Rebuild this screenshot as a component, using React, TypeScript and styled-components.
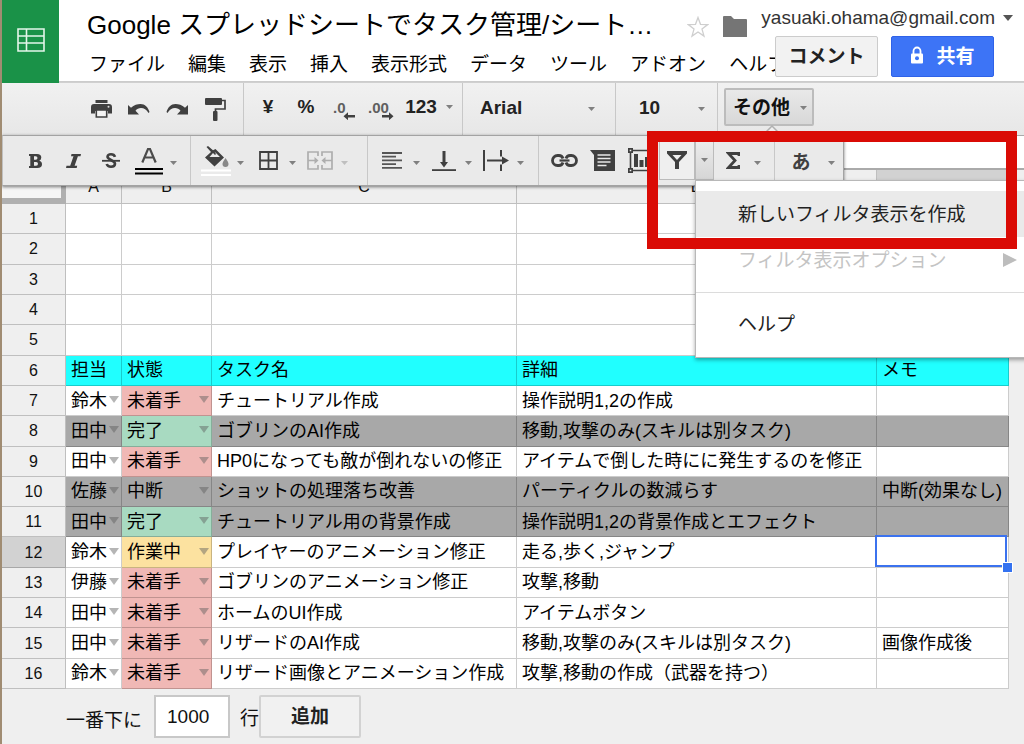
import React from 'react';
import styled, { createGlobalStyle, css } from 'styled-components';

const GlobalStyle = createGlobalStyle`
  *, *::before, *::after { box-sizing: border-box; }
  html { overflow: hidden; }
  body {
    margin: 0;
    background: #efefef;
    color: #111;
    font-family: "Liberation Sans", "Noto Sans CJK JP", sans-serif;
    font-size: 19px;
  }
  button, input, select { font: inherit; color: inherit; }
  svg { display: block; flex: none; }
`;

const Page = styled.div`
  position: relative;
  min-height: 100vh;
  border-left: 2px solid #a08c72;
  overflow: hidden;
`;

/* ---------- header ---------- */

const Header = styled.header`
  display: flex;
  height: 82px;
  background: #fff;
`;

const Logo = styled.a`
  flex: none;
  display: flex;
  align-items: center;
  justify-content: center;
  width: 57px;
  height: 83px;
  padding-bottom: 4px;
  background: #1a9248;
  z-index: 1;
`;

const HeaderBody = styled.div`
  flex: 1;
  min-width: 0;
  padding: 0 0 0 28px;
  border-bottom: 1px solid #ccc;
`;

const TitleRow = styled.div`
  display: flex;
  height: 36px;
  padding-right: 11px;
`;

const Title = styled.h1`
  margin: 0;
  flex: 1;
  font-size: 26px;
  font-weight: 400;
  line-height: 50px;
  white-space: nowrap;
  color: #000;
`;

const IconButton = styled.button`
  height: 53px;
  padding: 0;
  margin-right: 14px;
  border: 0;
  background: none;
`;

const Account = styled.button`
  display: flex;
  align-items: center;
  gap: 8px;
  height: 36px;
  padding: 0;
  border: 0;
  background: none;
  color: #333;
`;

const MenuRow = styled.div`
  display: flex;
  align-items: flex-start;
  gap: 13px;
  padding: 0 30px 0 2px;
`;

const MenuBar = styled.nav`
  flex: 1;
  min-width: 0;
  display: flex;
  gap: 23px;
  padding-top: 15px;
`;

const MenuLink = styled.a`
  flex: none;
  line-height: 28px;
  color: #000;
  text-decoration: none;
`;

const HeaderButton = styled.button<{ $primary?: boolean }>`
  position: relative;
  z-index: 1;
  flex: none;
  display: flex;
  align-items: center;
  justify-content: center;
  gap: 12px;
  width: 103px;
  height: 41px;
  padding: 0 0 4px;
  font-weight: 700;
  border: 1px solid #ccc;
  border-radius: 2px;
  background: #f2f2f2;
  color: #222;
  ${(p) => p.$primary && css`
    border-color: #2f62e8;
    background: #3d74f6;
    color: #fff;
  `}
`;

/* ---------- toolbars ---------- */

const Toolbar = styled.div`
  display: flex;
  height: 53px;
  padding-left: 80px;
  border-top: 1px solid #d0d0d0;
  background: linear-gradient(#f1f1f1, #e7e7e7);
`;

const Group = styled.div<{ $width: number; $pad?: number; $gap?: number; $open?: boolean }>`
  flex: none;
  display: flex;
  align-items: center;
  gap: ${(p) => p.$gap ?? 0}px;
  width: ${(p) => p.$width}px;
  padding-left: ${(p) => p.$pad ?? 0}px;
  border-right: ${(p) => (p.$open ? '0' : '1px solid #c8c8c8')};
`;

const Tool = styled.button<{ $wide?: boolean; $dim?: boolean; $text?: boolean }>`
  flex: none;
  display: flex;
  align-items: center;
  justify-content: center;
  gap: 9px;
  width: ${(p) => (p.$wide ? 56 : 38)}px;
  height: 38px;
  padding: 0 0 ${(p) => (p.$text ? 4 : 0)}px;
  border: 0;
  background: none;
  color: ${(p) => (p.$text ? '#222' : '#404040')};
  font-weight: 700;
  opacity: ${(p) => (p.$dim ? 0.35 : 1)};
`;

const Arrow = styled.button<{ $dim?: boolean }>`
  flex: none;
  display: flex;
  align-items: center;
  justify-content: center;
  width: 10px;
  height: 38px;
  margin-right: 4px;
  padding: 4px 0 0;
  border: 0;
  background: none;
  opacity: ${(p) => (p.$dim ? 0.4 : 1)};
`;

const Picker = styled.label<{ $end: number }>`
  display: flex;
  flex: 1;
  align-items: center;
  padding-right: ${(p) => p.$end}px;
`;

const PickerSelect = styled.select`
  flex: 1;
  min-width: 0;
  padding: 0 0 4px;
  border: 0;
  appearance: none;
  background: none;
  font-weight: 700;
  color: #222;
`;

const MoreButton = styled.button`
  display: flex;
  align-items: center;
  gap: 10px;
  width: 90px;
  height: 38px;
  margin: 5px 0 0 6px;
  padding: 0 0 4px 7px;
  border: 2px solid #bcbcbc;
  border-radius: 2px;
  background: linear-gradient(#e9e9e9, #d8d8d8);
  font-weight: 700;
  color: #111;
  svg { margin-top: 6px; }
`;

const Workspace = styled.div`
  position: relative;
`;

const Palette = styled.div`
  position: absolute;
  z-index: 2;
  top: 0;
  left: 0;
  display: flex;
  height: 51px;
  border: 1px solid #a3a3a3;
  border-left-color: #c0c0c0;
  background: #eaeaea;
  box-shadow: 0 1px 3px rgba(0, 0, 0, 0.5);
`;

const Callout = styled.svg`
  position: absolute;
  left: 761px;
  top: -11px;
  z-index: 3;
`;

const FilterSplit = styled.div`
  position: relative;
  display: flex;
  padding-top: 4px;
`;

const FilterButton = styled.button<{ $active?: boolean }>`
  display: flex;
  align-items: center;
  justify-content: center;
  width: ${(p) => (p.$active ? 19 : 36)}px;
  height: 40px;
  padding: 0;
  border: 1px solid #bbb;
  background: ${(p) => (p.$active ? 'linear-gradient(#ececec, #d6d6d6)' : '#efefef')};
`;

const Menu = styled.div`
  position: absolute;
  z-index: 4;
  top: 44px;
  left: 36px;
  width: 340px;
  height: 178px;
  padding-top: 10px;
  border: 1px solid #b8b8b8;
  background: #fff;
  box-shadow: 0 2px 4px rgba(0, 0, 0, 0.35);
`;

const MenuItem = styled.button<{ $state?: 'hover' | 'off' }>`
  display: flex;
  align-items: center;
  justify-content: space-between;
  width: 100%;
  height: 46px;
  padding: 0 17px 4px 42px;
  border: 0;
  background: ${(p) => (p.$state === 'hover' ? '#eaeaea' : '#fff')};
  color: ${(p) => (p.$state === 'off' ? '#c4c4c4' : '#222')};
  text-align: left;
  svg { margin-top: 4px; }
`;

const Rule = styled.hr`
  height: 1px;
  margin: 9px 0 8px;
  border: 0;
  background: #dcdcdc;
`;

const Highlight = styled.div`
  position: absolute;
  z-index: 5;
  top: -4px;
  left: 645px;
  width: 370px;
  height: 118px;
  border: 11px solid #da0b05;
  pointer-events: none;
`;

const FormulaBar = styled.input`
  display: block;
  width: 100%;
  height: 35px;
  padding: 0 8px;
  border: solid #aaa;
  border-width: 1px 0 2px;
  background: #fff;
`;

/* ---------- sheet ---------- */

const Sheet = styled.table`
  table-layout: fixed;
  width: 1007px;
  height: 519px;
  border-collapse: separate;
  border-spacing: 0;
`;

const line = '1px solid rgba(0, 0, 0, 0.2)';

const Corner = styled.td`
  height: 34px;
  padding: 0;
  border: solid #b0b0b0;
  border-width: 0 5px 6px 0;
  background: #f6f6f6;
`;

const Head = styled.th<{ $selected?: boolean }>`
  padding: 0;
  border-right: ${line};
  border-bottom: ${line};
  background: ${(p) => (p.$selected ? '#d2d2d2' : '#efefef')};
  font-size: 16px;
  font-weight: 400;
  line-height: 29px;
`;

const ColumnHead = styled(Head)`
  height: 34px;
`;

const fills = {
  none: '#fff',
  title: '#20ffff',
  done: '#a8a8a8',
  red: '#f0b8b5',
  green: '#a8dac1',
  yellow: '#fce2a0',
};
type Fill = keyof typeof fills;

const Cell = styled.td<{ $fill: Fill }>`
  position: relative;
  padding: 0 0 0 5px;
  border-right: ${line};
  border-bottom: ${line};
  background: ${(p) => fills[p.$fill]};
  font-size: 18px;
  line-height: 24px;
  white-space: nowrap;
  color: #000;
`;

const Choice = styled.div`
  display: flex;
  align-items: center;
  justify-content: space-between;
  padding-right: 2px;
`;

const ChoiceArrow = styled.button`
  padding: 0 0 2px;
  border: 0;
  background: none;
`;

const Cursor = styled.div`
  position: absolute;
  inset: -2px 1px 0 -2px;
  border: 2px solid #3b72ee;
`;

const Handle = styled.div`
  position: absolute;
  z-index: 1;
  right: -5px;
  bottom: -6px;
  width: 11px;
  height: 11px;
  border: 1px solid #fff;
  background: #3472f0;
`;

const Footer = styled.form`
  display: flex;
  align-items: center;
  height: 55px;
  padding-left: 64px;
`;

const FooterLabel = styled.label`
  padding-top: 8px;
  line-height: 28px;
`;

const RowCount = styled.input`
  width: 76px;
  height: 43px;
  margin: 0 10px 0 12px;
  padding: 0 0 0 11px;
  border: 2px solid #c8c8c8;
  background: #fff;
`;

const AddButton = styled.button`
  width: 102px;
  height: 43px;
  padding: 0 0 5px;
  border: 2px solid #d2d2d2;
  border-radius: 2px;
  background: #f1f1f1;
  font-weight: 700;
  color: #222;
`;

/* ---------- icons ---------- */

const ink = '#404040';

const Caret = ({ color = '#808080', w = 7, h = 4 }: { color?: string; w?: number; h?: number }) => (
  <svg width={w} height={h} viewBox="0 0 8 5" preserveAspectRatio="none" fill={color} aria-hidden>
    <path d="M0 0h8L4 5z" />
  </svg>
);

const SheetsIcon = () => (
  <svg width="28" height="24" viewBox="0 0 28 24" fill="none" stroke="#e4f6ea" strokeWidth="1.6">
    <path d="M1 1h26v22H1zM1 8h26M1 15h26M9.500 1v22" />
  </svg>
);

const Star = () => (
  <svg width="22" height="22" viewBox="0 0 22 22" fill="#fff" stroke="#cfcfcf" strokeWidth="1.3">
    <path d="M11 1.500l2.500 6.800 7.200.3-5.700 4.500 2 7L11 16l-6 4.100 2-7L1.300 8.600l7.200-.3z" />
  </svg>
);

const Folder = () => (
  <svg width="24" height="21" viewBox="0 0 24 21" fill="#757575">
    <path d="M0 1q0-1 1-1h7l3 3h12q1 0 1 1v17H0z" />
  </svg>
);

const Lock = () => (
  <svg width="14" height="18" viewBox="0 0 14 18">
    <path d="M3.500 8V5a3.500 3.500 0 0 1 7 0v3" fill="none" stroke="#fff" strokeWidth="1.8" />
    <rect x="1" y="7.500" width="12" height="10" rx="1" fill="#fff" />
    <circle cx="7" cy="12.300" r="2" fill="#3d74f6" />
  </svg>
);

const Printer = () => (
  <svg width="21" height="18" viewBox="0 0 21 18" fill={ink}>
    <path d="M4.500 0h12v3h-12z" />
    <path d="M3 4h15q3 0 3 3v6.500h-4V11H4v2.500H0V7q0-3 3-3z" />
    <path d="M5.300 10h10.400v7H5.300z" fill="#f4f4f4" stroke={ink} strokeWidth="1.6" />
    <circle cx="17.500" cy="6.800" r="1" fill="#ddd" />
  </svg>
);

const Undo = ({ flip }: { flip?: boolean }) => (
  <svg width="22" height="11" viewBox="0 0 22 11">
    <g transform={flip ? 'translate(22 0) scale(-1 1)' : undefined} fill={ink}>
      <path d="M0 1l3 2.800C6 .8 9.500 0 12.500 0 17 0 20 3 21.500 8l-1 1C18.500 5.500 16 4 13 4c-2.300 0-4.200.9-5.500 2.800L11 10.500H0z" />
    </g>
  </svg>
);

const Roller = () => (
  <svg width="21" height="23" viewBox="0 0 21 23" fill={ink}>
    <rect width="17" height="7" rx="1" />
    <path d="M17 2.500h3V11h-9.500v3.500" fill="none" stroke={ink} strokeWidth="1.700" />
    <rect x="8" y="13" width="4.500" height="10" rx="1" />
  </svg>
);

const Decimals = ({ more }: { more?: boolean }) => (
  <svg width="28" height="22" viewBox="0 0 28 22" fill="#606060">
    <text x={more ? 0 : 3} y="15" fontSize="15" fontWeight="700" fontFamily="Liberation Sans, sans-serif">
      {more ? '.00' : '.0'}
    </text>
    {more ? (
      <path d="M14 17h7v-2.800l4.500 4-4.500 4v-2.800h-7z" fill={ink} />
    ) : (
      <path d="M25 17h-7v-2.800l-4.500 4 4.500 4v-2.800h7z" fill={ink} />
    )}
  </svg>
);

const Bold = () => (
  <svg width="13" height="14" viewBox="0 0 13 14" fill={ink} fillRule="evenodd">
    <path d="M0 0h8q4.300 0 4.300 3.600 0 2.400-2 3.100 2.700.7 2.700 3.500Q13 14 8.400 14H0v-2h1.300V2H0zM5 2.300v3.400h1.700Q8.500 5.700 8.500 4T6.700 2.300zM5 8v3.700h2q2 0 2-1.900T7 8z" />
  </svg>
);

const Italic = () => (
  <svg width="15" height="14" viewBox="0 0 15 14" fill={ink}>
    <path d="M5.500 0H15l-.5 2.300h-2.600L8.600 11.700h2.600L10.700 14H0l.5-2.300h3.700L7.500 2.300H5z" />
  </svg>
);

const Strike = () => (
  <svg width="18" height="15" viewBox="0 0 18 15" fill="none" stroke={ink}>
    <path d="M13 3.800Q12.200 1.300 9 1.300T5.500 3.800C5.500 7 13 7 13 10.800q0 2.900-4 2.900-3.500 0-4.300-2.700" strokeWidth="2.600" />
    <path d="M0 7.800h18" strokeWidth="1.800" />
  </svg>
);

const TextColor = () => (
  <svg width="30" height="28" viewBox="0 0 30 28">
    <path d="M8.300 15.500L14 2h2l5.700 13.500M10.500 10.500h9" fill="none" stroke="#4c4c4c" strokeWidth="2.200" />
    <path d="M1 22h28M1 26.500h28" stroke="#000" strokeWidth="2" />
  </svg>
);

const Bucket = () => (
  <svg width="31" height="30" viewBox="0 0 31 30" fill={ink}>
    <path d="M5.500 1L7 0l5 4.200L14.500 3 23 11.500 13.500 20.500 4 11.500 10 6z" />
    <path d="M13.500 5.500L19 11H8.500l3.500-4 2 2 1-1z" fill="#eaeaea" />
    <path d="M24.500 12q3 4 3 6a3 3 0 0 1-6 0q0-2 3-6z" fill="#888" />
    <path d="M0 24.500h30M0 29h30" stroke="#fff" strokeWidth="2" />
  </svg>
);

const Borders = () => (
  <svg width="19" height="19" viewBox="0 0 19 19" fill="none" stroke={ink} strokeWidth="1.800">
    <path d="M1 1h17v17H1zM9.500 1v17M1 9.500h17" />
  </svg>
);

const Merge = () => (
  <svg width="26" height="19" viewBox="0 0 26 19" fill="none" stroke={ink} strokeWidth="1.700">
    <path d="M11 5V1H1v17h10v-4M15 5V1h10v17H15v-4M1 9.500h7M25 9.500h-7" />
    <path d="M7.500 6l4 3.500-4 3.500zM18.500 6l-4 3.500 4 3.500z" fill={ink} stroke="none" />
  </svg>
);

const AlignLeft = () => (
  <svg width="21" height="17" viewBox="0 0 21 17" stroke="#555" strokeWidth="1.800">
    <path d="M0 1h20M0 4.700h14M0 8.400h20M0 12.100h14M0 15.800h20" />
  </svg>
);

const AlignBottom = () => (
  <svg width="24" height="20" viewBox="0 0 24 20" fill={ink}>
    <path d="M10.500 0h3v11H16l-4 5.500L8 11h2.500z" />
    <path d="M0 18.200h24V20H0z" />
  </svg>
);

const Wrap = () => (
  <svg width="26" height="21" viewBox="0 0 26 21" fill={ink}>
    <path d="M0 0h2v21H0zM17 0h2v6.500h-2zM17 14.500h2V21h-2zM4 9.500h15V6.500l7 4-7 4v-3H4z" />
  </svg>
);

const LinkIcon = () => (
  <svg width="27" height="13" viewBox="0 0 27 13" fill="none" stroke={ink} strokeWidth="2.800">
    <path d="M12 4.500Q11 1.500 8 1.500H6.500a5 5 0 0 0 0 10H8q3 0 4-3M15 4.500q1-3 4-3h1.500a5 5 0 0 1 0 10H19q-3 0-4-3" />
    <path d="M8.500 6.500h10" strokeWidth="2.200" />
  </svg>
);

const CommentIcon = () => (
  <svg width="25" height="21" viewBox="0 0 25 21" fill={ink}>
    <path d="M0 0h25v21H4V5z" />
    <path d="M7.500 5h13M7.500 8.500h13M7.500 12h13M7.500 15.500h9" stroke="#e8e8e8" strokeWidth="1.700" />
  </svg>
);

const ChartIcon = () => (
  <svg width="25" height="25" viewBox="0 0 25 25" fill={ink}>
    <path d="M2.500 2.500h20v20h-20z" fill="none" stroke={ink} strokeWidth="1.600" />
    <path d="M0 0h5v5H0zM20 0h5v5h-5zM0 20h5v5H0zM20 20h5v5h-5zM6 6h4v13H6zM11.500 12h4v7h-4zM17 9h3.500v10H17z" />
    <path d="M1.700 1.700h1.600v1.600H1.700zM1.700 21.700h1.600v1.600H1.700z" fill="#eee" />
  </svg>
);

const Funnel = () => (
  <svg width="20" height="18" viewBox="0 0 20 18">
    <path d="M0 0h20v2.500L12 11v7H8v-7L0 2.500z" fill={ink} />
    <path d="M5.500 4h9L10 9z" fill="#efefef" />
  </svg>
);

const Sigma = () => (
  <svg width="14" height="17" viewBox="0 0 14 17" fill="none" stroke={ink} strokeWidth="2.800">
    <path d="M13 4V1.500H2.500L9 8.500l-6.500 7H13V13" />
  </svg>
);

/* ---------- data ---------- */

const menus = ['ファイル', '編集', '表示', '挿入', '表示形式', 'データ', 'ツール', 'アドオン', 'ヘルプ'];

const columns = ['A', 'B', 'C', 'D', 'E'];

const statusFill: Record<string, Fill> = {
  未着手: 'red',
  完了: 'green',
  作業中: 'yellow',
  中断: 'done',
};

const rows: string[][] = [
  [], [], [], [], [],
  ['担当', '状態', 'タスク名', '詳細', 'メモ'],
  ['鈴木', '未着手', 'チュートリアル作成', '操作説明1,2の作成', ''],
  ['田中', '完了', 'ゴブリンのAI作成', '移動,攻撃のみ(スキルは別タスク)', ''],
  ['田中', '未着手', 'HP0になっても敵が倒れないの修正', 'アイテムで倒した時にに発生するのを修正', ''],
  ['佐藤', '中断', 'ショットの処理落ち改善', 'パーティクルの数減らす', '中断(効果なし)'],
  ['田中', '完了', 'チュートリアル用の背景作成', '操作説明1,2の背景作成とエフェクト', ''],
  ['鈴木', '作業中', 'プレイヤーのアニメーション修正', '走る,歩く,ジャンプ', ''],
  ['伊藤', '未着手', 'ゴブリンのアニメーション修正', '攻撃,移動', ''],
  ['田中', '未着手', 'ホームのUI作成', 'アイテムボタン', ''],
  ['田中', '未着手', 'リザードのAI作成', '移動,攻撃のみ(スキルは別タスク)', '画像作成後'],
  ['鈴木', '未着手', 'リザード画像とアニメーション作成', '攻撃,移動の作成（武器を持つ）', ''],
];

const SELECTED_ROW = 12;

const fillFor = (row: string[], n: number, col: number): Fill => {
  if (n < 6) return 'none';
  if (n === 6) return 'title';
  if (col === 1) return statusFill[row[1]];
  return row[1] === '完了' || row[1] === '中断' ? 'done' : 'none';
};

const Split = ({ label, dim, children }: { label: string; dim?: boolean; children: React.ReactNode }) => (
  <>
    <Tool aria-label={label} $dim={dim}>{children}</Tool>
    <Arrow aria-label={`${label}のオプション`} $dim={dim}><Caret /></Arrow>
  </>
);

export default function App() {
  return (
    <Page>
      <GlobalStyle />
      <Header>
        <Logo href="#" aria-label="スプレッドシート"><SheetsIcon /></Logo>
        <HeaderBody>
          <TitleRow>
            <Title>Google スプレッドシートでタスク管理/シート…</Title>
            <IconButton aria-label="スター"><Star /></IconButton>
            <IconButton aria-label="フォルダ"><Folder /></IconButton>
            <Account>yasuaki.ohama@gmail.com<Caret color="#555" w={10} h={6} /></Account>
          </TitleRow>
          <MenuRow>
            <MenuBar>
              {menus.map((m) => <MenuLink key={m} href="#">{m}</MenuLink>)}
            </MenuBar>
            <HeaderButton>コメント</HeaderButton>
            <HeaderButton $primary><Lock />共有</HeaderButton>
          </MenuRow>
        </HeaderBody>
      </Header>

      <Toolbar role="toolbar">
        <Group $width={162}>
          <Tool aria-label="印刷"><Printer /></Tool>
          <Tool aria-label="元に戻す"><Undo /></Tool>
          <Tool aria-label="やり直し"><Undo flip /></Tool>
          <Tool aria-label="書式をコピー"><Roller /></Tool>
        </Group>
        <Group $width={219} $pad={5}>
          <Tool $text>¥</Tool>
          <Tool $text>%</Tool>
          <Tool aria-label="小数点以下の桁数を減らす"><Decimals /></Tool>
          <Tool aria-label="小数点以下の桁数を増やす"><Decimals more /></Tool>
          <Tool $wide $text>123<Caret /></Tool>
        </Group>
        <Group $width={153} $pad={17}>
          <Picker $end={20}>
            <PickerSelect aria-label="フォント"><option>Arial</option></PickerSelect>
            <Caret />
          </Picker>
        </Group>
        <Group $width={102} $pad={23}>
          <Picker $end={12}>
            <PickerSelect aria-label="フォントサイズ"><option>10</option></PickerSelect>
            <Caret />
          </Picker>
        </Group>
        <MoreButton>その他<Caret /></MoreButton>
      </Toolbar>

      <Workspace>
        <Callout width="18" height="10" viewBox="0 0 18 10">
          <path d="M1 10l8-8 8 8" fill="#efefef" stroke="#b0b0b0" strokeWidth="1.500" />
        </Callout>
        <Palette role="toolbar">
          <Group $width={188} $pad={13}>
            <Tool aria-label="太字"><Bold /></Tool>
            <Tool aria-label="斜体"><Italic /></Tool>
            <Tool aria-label="取り消し線"><Strike /></Tool>
            <Split label="テキストの色"><TextColor /></Split>
          </Group>
          <Group $width={177} $pad={6}>
            <Split label="塗りつぶしの色"><Bucket /></Split>
            <Split label="枠線"><Borders /></Split>
            <Split label="セルを結合" dim><Merge /></Split>
          </Group>
          <Group $width={171} $pad={5}>
            <Split label="水平方向の配置"><AlignLeft /></Split>
            <Split label="垂直方向の配置"><AlignBottom /></Split>
            <Split label="テキストを折り返す"><Wrap /></Split>
          </Group>
          <Group $width={120} $pad={6} $open>
            <Tool aria-label="リンクを挿入"><LinkIcon /></Tool>
            <Tool aria-label="コメントを挿入"><CommentIcon /></Tool>
            <Tool aria-label="グラフを挿入"><ChartIcon /></Tool>
          </Group>
          <FilterSplit>
            <FilterButton aria-label="フィルタを作成"><Funnel /></FilterButton>
            <FilterButton $active aria-label="フィルタ表示"><Caret /></FilterButton>
            <Menu>
              <MenuItem $state="hover">新しいフィルタ表示を作成</MenuItem>
              <MenuItem $state="off" disabled>
                フィルタ表示オプション
                <svg width="14" height="14" viewBox="0 0 14 14" fill="#bdbdbd"><path d="M0 0l14 7-14 7z" /></svg>
              </MenuItem>
              <Rule />
              <MenuItem>ヘルプ</MenuItem>
            </Menu>
          </FilterSplit>
          <Group $width={61}>
            <Split label="関数"><Sigma /></Split>
          </Group>
          <Group $width={68} $pad={7} $gap={6} $open>
            <Tool aria-label="入力ツール">あ</Tool>
            <Arrow aria-label="入力ツールのオプション"><Caret /></Arrow>
          </Group>
        </Palette>
        <FormulaBar aria-label="数式バー" />
        <Sheet>
          <colgroup>
            <col style={{ width: 64 }} />
            <col style={{ width: 56 }} />
            <col style={{ width: 90 }} />
            <col style={{ width: 305 }} />
            <col style={{ width: 360 }} />
            <col style={{ width: 132 }} />
          </colgroup>
          <thead>
            <tr>
              <Corner />
              {columns.map((c) => (
                <ColumnHead key={c} scope="col" $selected={c === 'E'}>{c}</ColumnHead>
              ))}
            </tr>
          </thead>
          <tbody>
            {rows.map((row, i) => {
              const n = i + 1;
              return (
                <tr key={n}>
                  <Head scope="row" $selected={n === SELECTED_ROW}>{n}</Head>
                  {columns.map((c, col) => (
                    <Cell key={c} $fill={fillFor(row, n, col)}>
                      {n > 6 && col < 2 ? (
                        <Choice>
                          {row[col]}
                          <ChoiceArrow aria-label="選択肢を表示">
                            <Caret color="rgba(90, 90, 90, 0.45)" w={10} h={7} />
                          </ChoiceArrow>
                        </Choice>
                      ) : row[col]}
                      {n === SELECTED_ROW && c === 'E' && <><Cursor /><Handle /></>}
                    </Cell>
                  ))}
                </tr>
              );
            })}
          </tbody>
        </Sheet>
        <Highlight />
      </Workspace>

      <Footer onSubmit={(e) => e.preventDefault()}>
        <FooterLabel htmlFor="row-count">一番下に</FooterLabel>
        <RowCount id="row-count" defaultValue="1000" />
        <span>行</span>
        <AddButton>追加</AddButton>
      </Footer>
    </Page>
  );
}
